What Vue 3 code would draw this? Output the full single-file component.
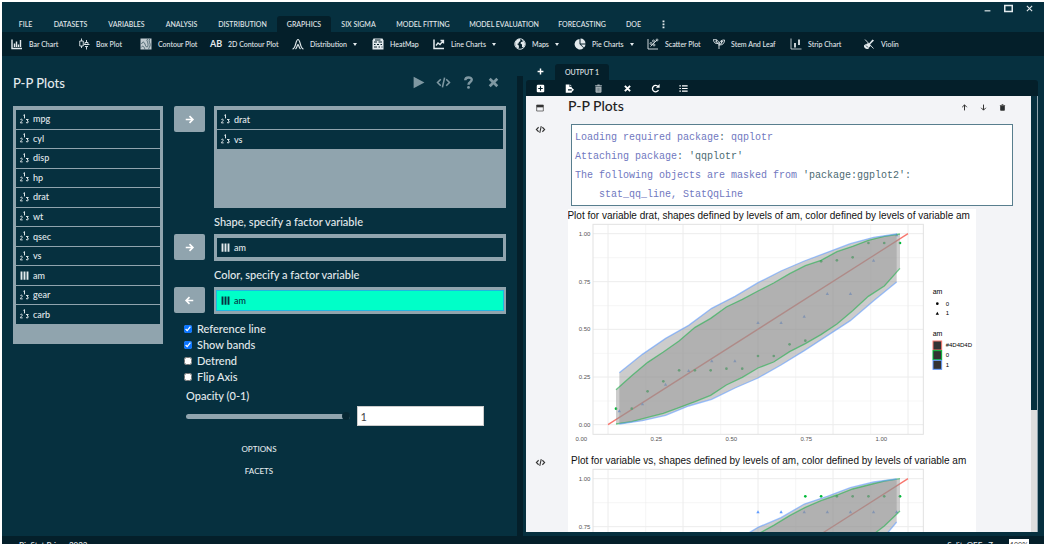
<script setup>
import { ref } from 'vue'

const icons = {
  bar: '<path d="M2 3v18h20M7 11v7M11 7v11M15 13v5M19 4v14" fill="none" stroke="currentColor" stroke-width="2.8"/>',
  box: '<path d="M7 1v5M7 16v4M17 4v5M17 17v6M3.500 6h7v10h-7zM14 9v4h6V9zM12 13h11M14 17h6" fill="none" stroke="currentColor" stroke-width="1.800"/>',
  contour: '<path d="M1 1h22v22H1z" fill="currentColor" opacity=".85"/><path d="M3 12c4-9 7 0 8 3s5 6 5-2-5-8 0-11M2 19c4-5 6-2 8 4M19 2c-3 5 3 9 1 14s-3 3-2 7" fill="none" stroke="#34505c" stroke-width="1.600"/>',
  dist: '<path d="M1 22c7 0 6-19 11-19s4 19 11 19M7 22c4-3 3-9 5-9s1 6 5 9" fill="none" stroke="currentColor" stroke-width="2.400"/>',
  heat: '<path d="M3 1h18l2 4v18H1V5z" fill="currentColor"/><path d="M4 8h6M13 8h7M4 13h3M10 13h4M17 13h3M4 18h6M13 18h3M19 18h2M6 4h11" stroke="#041f2a" stroke-width="2.200"/>',
  line: '<path d="M2 3v18h20" fill="none" stroke="currentColor" stroke-width="3"/><path d="M6 15l4-5 4 3 6-7M15 5h6v6" fill="none" stroke="currentColor" stroke-width="2.600"/>',
  globe: '<circle cx="12" cy="12" r="10.500" fill="none" stroke="currentColor" stroke-width="1.800"/><path d="M3 7c3-4 6-5 9-5l1 4-3 2-1 3-3 1 3 2 1 4-1 3c-5-2-8-7-6-14zM15 3c5 2 7 6 7 10l-3 6-3-1v-5l-3-2 1-3 4-1z" fill="currentColor"/>',
  pie: '<path d="M11 2a10.500 10.500 0 1 0 8 18l-8-8zM13 1v10h10A10 10 0 0 0 13 1zM14 13l6 6a10 10 0 0 0 3-6z" fill="currentColor"/>',
  scatter: '<path d="M2 2v20h20M7 17l13-13" fill="none" stroke="currentColor" stroke-width="1.800"/><g fill="none" stroke="currentColor" stroke-width="1.500"><circle cx="8" cy="11" r="2"/><circle cx="13" cy="6" r="2"/><circle cx="14" cy="14" r="2"/><circle cx="20" cy="4" r="2"/></g>',
  leaf: '<path d="M12 22V11C11 4 7 3 1 3c0 6 4 9 9 8M12 15c0-8 4-11 11-11 0 6-3 10-10 10M5 6l6 6M20 6l-7 8M6 3l2 6M17 5l0 6" fill="none" stroke="currentColor" stroke-width="1.800"/>',
  strip: '<path d="M2 1v21h21" fill="none" stroke="currentColor" stroke-width="1.600"/><path d="M10 10v9M18 3v11" stroke="currentColor" stroke-width="3.500"/>',
  violin: '<path d="M2 15c2-3 4-1 5-3s3-2 5-1l7-8 3 2-8 8c2 2 1 4-1 5s0 3-3 4-9-2-8-7z" fill="currentColor"/><path d="M4 3l17 18M5 18l5-5" stroke="currentColor" stroke-width="1.800"/><path d="M6 15l4 4" stroke="#041f2a" stroke-width="1.600"/>',
  play: '<path d="M3 1.500v21L23 12z" fill="currentColor"/>',
  code: '<path d="M7 6l-6 6 6 6M17 6l6 6-6 6M14 3l-4 18" fill="none" stroke="currentColor" stroke-width="2.900"/>',
  help: '<path d="M6 8c0-7 12-7 12-1 0 4-6 4-6 9" fill="none" stroke="currentColor" stroke-width="4.500"/><circle cx="12" cy="21" r="2.600" fill="currentColor"/>',
  close: '<path d="M5 5l14 14M19 5L5 19" stroke="currentColor" stroke-width="5"/>',
  plus: '<path d="M12 2v20M2 12h20" stroke="currentColor" stroke-width="5"/>',
  addBox: '<path d="M2 5a3 3 0 0 1 3-3h14a3 3 0 0 1 3 3v14a3 3 0 0 1-3 3H5a3 3 0 0 1-3-3z" fill="currentColor"/><path d="M12 6v12M6 12h12" stroke="#041f2a" stroke-width="3"/>',
  exportFile: '<path d="M2 1h10v7h6v6H8v3h10v6H2zM14 1l4 5h-4zM18 10l6 5.500-6 5.500z" fill="currentColor"/>',
  trash: '<path d="M3 3h6V1h6v2h6v3H3zM4 7h16v14l-2 2H6l-2-2z" fill="currentColor"/><path d="M8.500 10v10M12 10v10M15.500 10v10" stroke="#041f2a" stroke-opacity=".6" stroke-width="1.200"/>',
  redo: '<path d="M19 7A8.500 8.500 0 1 0 20 16" fill="none" stroke="currentColor" stroke-width="3.500"/><path d="M13 10h10V0z" fill="currentColor"/>',
  list: '<path d="M8 5h15M8 12h15M8 19h15M1 5h4M1 12h4M1 19h4" stroke="currentColor" stroke-width="3.200"/>',
  panel: '<path d="M2 3h20v18H2z" fill="none" stroke="currentColor" stroke-width="2"/><path d="M2 3h20v7H2z" fill="currentColor"/>',
  up: '<path d="M12 22V3M4 11l8-8 8 8" fill="none" stroke="currentColor" stroke-width="3.400"/>',
  down: '<path d="M12 2v19M4 13l8 8 8-8" fill="none" stroke="currentColor" stroke-width="3.400"/>',
  right: '<path d="M2 12h19M12 3l9 9-9 9" fill="none" stroke="currentColor" stroke-width="4.400"/>',
  left: '<path d="M22 12H3M12 3l-9 9 9 9" fill="none" stroke="currentColor" stroke-width="4.400"/>',
  factor: '<path d="M4 1v22M12 1v22M20 1v22" stroke="currentColor" stroke-width="5"/>',
  scale: '<g fill="none" stroke="currentColor" stroke-width="2.600"><path d="M9 1l3-2v10"/><path d="M1 13c1-3 6-2 5 1-1 2-5 5-5 7h6M16 12h6l-3 4c5 0 4 5 0 5l-3-1"/></g>',
  more: '<path d="M12 1v5M12 9v5M12 17v5" stroke="currentColor" stroke-width="5"/>',
  minimise: '<path d="M2 20h20" stroke="currentColor" stroke-width="4"/>',
  maximise: '<path d="M2 4h20v16H2z" fill="none" stroke="currentColor" stroke-width="4"/>',
  shut: '<path d="M3 3l18 18M21 3L3 21" stroke="currentColor" stroke-width="3.800"/>'
}

const menus = ['FILE', 'DATASETS', 'VARIABLES', 'ANALYSIS', 'DISTRIBUTION', 'GRAPHICS', 'SIX SIGMA', 'MODEL FITTING', 'MODEL EVALUATION', 'FORECASTING', 'DOE']
const tools = [
  { icon: 'bar', label: 'Bar Chart' },
  { icon: 'box', label: 'Box Plot' },
  { icon: 'contour', label: 'Contour Plot' },
  { text: 'AB', label: '2D Contour Plot' },
  { icon: 'dist', label: 'Distribution', more: true },
  { icon: 'heat', label: 'HeatMap' },
  { icon: 'line', label: 'Line Charts', more: true },
  { icon: 'globe', label: 'Maps', more: true },
  { icon: 'pie', label: 'Pie Charts', more: true },
  { icon: 'scatter', label: 'Scatter Plot' },
  { icon: 'leaf', label: 'Stem And Leaf' },
  { icon: 'strip', label: 'Strip Chart' },
  { icon: 'violin', label: 'Violin' }
]
const variables = ['mpg', 'cyl', 'disp', 'hp', 'drat', 'wt', 'qsec', 'vs', 'am', 'gear', 'carb']
const checks = ref([
  { label: 'Reference line', on: true },
  { label: 'Show bands', on: true },
  { label: 'Detrend', on: false },
  { label: 'Flip Axis', on: false }
])
const opacity = ref(1)
const outputTools = ['addBox', 'exportFile', 'trash', 'close', 'redo', 'list']

const gx = i => 168 + i * 47.333
const bx = i => 178 + i * 69.333
const path = (x, ys) => ys.map((y, i) => `${Math.round(x(i))},${y}`).join(' ')
const area = (x, upper, lower) =>
  path(x, upper) + ' ' + lower.map((y, i) => `${Math.round(x(i))},${y}`).reverse().join(' ')

const series = [
  {
    name: 'drat',
    gu: [554, 512, 472, 441, 408, 367, 340, 306, 283, 258, 234, 206, 182, 166, 140, 124, 106, 94, 87],
    gl: [657, 650, 637, 625, 608, 590, 571, 540, 517, 489, 471, 440, 416, 389, 357, 317, 274, 243, 190],
    bu: [503, 448, 400, 361, 310, 274, 233, 198, 168, 142, 116, 97, 87],
    bl: [657, 647, 631, 603, 583, 549, 519, 480, 437, 392, 347, 287, 231],
    gp: [611, 611, 559, 529, 496, 496, 496, 491, 491, 453, 453, 418, 407, 169, 166, 157, 114, 114, 114],
    bp: [618, 597, 538, 497, 468, 468, 353, 353, 334, 266, 266, 166, 90]
  },
  {
    name: 'vs',
    gu: [554, 512, 472, 441, 408, 367, 340, 306, 283, 252, 226, 197, 172, 152, 135, 117, 105, 93, 86],
    gl: [657, 650, 637, 625, 608, 590, 571, 540, 517, 489, 471, 440, 416, 389, 357, 317, 265, 228, 183],
    bu: [503, 448, 400, 361, 310, 274, 232, 203, 162, 139, 113, 96, 87],
    bl: [657, 647, 631, 603, 583, 549, 519, 480, 437, 392, 347, 299, 216],
    gp: [599, 599, 599, 599, 599, 599, 599, 599, 599, 599, 599, 599, 139, 139, 139, 139, 139, 139, 139],
    bp: [552, 552, 552, 552, 552, 552, 186, 186, 186, 186, 186, 186, 186]
  }
]
const ticks = [
  { t: '1.00', x: 1044, y: 86 },
  { t: '0.75', x: 819, y: 230 },
  { t: '0.50', x: 594, y: 373 },
  { t: '0.25', x: 369, y: 516 },
  { t: '0.00', x: 144, y: 659 }
]
</script>

<template>
  <div class="window">
    <header class="menubar">
      <nav class="menus">
        <button v-for="m in menus" :key="m" class="menu" :class="{ active: m === 'GRAPHICS' }">{{ m }}</button>
        <button class="menu" aria-label="More menus"><svg class="i9" viewBox="0 0 24 24" v-html="icons.more"></svg></button>
      </nav>
      <div class="controls">
        <button aria-label="Minimise"><svg class="i7" viewBox="0 0 24 24" v-html="icons.minimise"></svg></button>
        <button aria-label="Maximise"><svg class="i9" viewBox="0 0 24 24" v-html="icons.maximise"></svg></button>
        <button aria-label="Close"><svg class="i7" viewBox="0 0 24 24" v-html="icons.shut"></svg></button>
      </div>
    </header>

    <div class="toolbar">
      <button v-for="t in tools" :key="t.label" class="tool">
        <b v-if="t.text" class="ab">{{ t.text }}</b>
        <svg v-else class="i12" viewBox="0 0 24 24" v-html="icons[t.icon]"></svg>
        <span>{{ t.label }}</span>
        <i v-if="t.more" class="caret"></i>
      </button>
    </div>

    <main class="work">
      <section class="dialog">
        <div class="dialog-head">
          <h1>P-P Plots</h1>
          <div class="dialog-actions">
            <button v-for="a in ['play', 'code', 'help', 'close']" :key="a" :aria-label="a">
              <svg class="i13" viewBox="0 0 24 24" v-html="icons[a]"></svg>
            </button>
          </div>
        </div>

        <div class="form">
          <ul class="source well">
            <li v-for="v in variables" :key="v" class="var">
              <svg class="i9" viewBox="0 0 24 24" v-html="v === 'am' ? icons.factor : icons.scale"></svg>{{ v }}
            </li>
          </ul>

          <div class="targets">
            <div class="target">
              <button class="move" aria-label="Add variable"><svg class="i9" viewBox="0 0 24 24" v-html="icons.right"></svg></button>
              <ul class="well tall">
                <li v-for="v in ['drat', 'vs']" :key="v" class="var"><svg class="i9" viewBox="0 0 24 24" v-html="icons.scale"></svg>{{ v }}</li>
              </ul>
            </div>
            <p class="caption">Shape, specify a factor variable</p>
            <div class="target">
              <button class="move" aria-label="Add shape"><svg class="i9" viewBox="0 0 24 24" v-html="icons.right"></svg></button>
              <ul class="well"><li class="var"><svg class="i9" viewBox="0 0 24 24" v-html="icons.factor"></svg>am</li></ul>
            </div>
            <p class="caption">Color, specify a factor variable</p>
            <div class="target">
              <button class="move" aria-label="Remove color"><svg class="i9" viewBox="0 0 24 24" v-html="icons.left"></svg></button>
              <ul class="well"><li class="var picked"><svg class="i9" viewBox="0 0 24 24" v-html="icons.factor"></svg>am</li></ul>
            </div>

            <div class="checks">
              <label v-for="c in checks" :key="c.label"><input v-model="c.on" type="checkbox" />{{ c.label }}</label>
            </div>
            <label class="opacity-label" for="opacity">Opacity (0-1)</label>
            <div class="opacity">
              <input id="opacity" v-model="opacity" type="range" min="0" max="1" step="0.1" />
              <input v-model="opacity" type="text" class="number" aria-label="Opacity value" />
            </div>
            <div class="more">
              <button>OPTIONS</button>
              <button>FACETS</button>
            </div>
          </div>
        </div>
      </section>

      <div class="splitter"></div>

      <section class="output">
        <div class="output-tabs">
          <button class="new" aria-label="New output"><svg class="i7" viewBox="0 0 24 24" v-html="icons.plus"></svg></button>
          <button class="menu active">OUTPUT 1</button>
        </div>
        <div class="output-tools">
          <button v-for="o in outputTools" :key="o" :aria-label="o">
            <svg class="i9" :class="o" viewBox="0 0 24 24" v-html="icons[o]"></svg>
          </button>
        </div>
        <div class="viewport">
          <div class="doc">
            <div class="doc-head">
              <svg class="gutter" viewBox="0 0 24 24" v-html="icons.panel"></svg>
              <h2>P-P Plots</h2>
              <div class="doc-actions">
                <button v-for="a in ['up', 'down', 'trash']" :key="a" :aria-label="a">
                  <svg class="i7" viewBox="0 0 24 24" v-html="icons[a]"></svg>
                </button>
              </div>
            </div>
            <div class="block">
              <svg class="gutter" viewBox="0 0 24 24" v-html="icons.code"></svg>
              <pre class="log">Loading required package<em>:</em> qqplotr
Attaching package<em>: 'qqplotr'</em>
The following objects are masked from <em>'package:ggplot2':</em>
    stat_qq_line, StatQqLine</pre>
            </div>
            <div v-for="s in series" :key="s.name" class="block plot">
              <svg class="gutter" :class="{ blank: s.name === 'drat' }" viewBox="0 0 24 24" v-html="icons.code"></svg>
              <svg class="chart" viewBox="24 12 1224 735">
                <rect x="24" y="12" width="1224" height="735" fill="#fff" />
                <text class="chart-title" x="626" y="42" text-anchor="middle">Plot for variable {{ s.name }}, shapes defined by levels of am, color defined by levels of variable am</text>
                <g stroke="#ececec" fill="none">
                  <g v-for="t in ticks" :key="t.t">
                    <path :d="`M99 ${t.y}H1090M${t.x} 58V688`" stroke-width="3" />
                    <path v-if="t.y < 600" :d="`M99 ${t.y + 72}H1090M${t.x - 112} 58V688`" stroke-width="1.5" />
                  </g>
                  <rect x="99" y="58" width="991" height="630" stroke="#e2e2e2" stroke-width="3" />
                </g>
                <g v-for="t in ticks" :key="'l' + t.t" class="tick">
                  <text x="91" :y="t.y + 6" text-anchor="end">{{ t.t }}</text>
                  <text :x="t.x - 80" y="709" text-anchor="middle">{{ t.t }}</text>
                </g>
                <path d="M144 659L1044 86" stroke="#f8766d" stroke-width="4" />
                <circle v-for="(y, i) in s.gp" :key="'g' + i" :cx="gx(i)" :cy="y" r="4" fill="#00ba38" />
                <path v-for="(y, i) in s.bp" :key="'b' + i" :d="`M${bx(i) - 5} ${y + 4}h10l-5-9z`" fill="#619cff" />
                <polygon :points="area(gx, s.gu, s.gl)" fill="#929292" fill-opacity=".47" />
                <polygon :points="area(bx, s.bu, s.bl)" fill="#929292" fill-opacity=".47" />
                <polyline :points="path(gx, s.gu)" class="edge green" />
                <polyline :points="path(gx, s.gl)" class="edge green" />
                <polyline :points="path(bx, s.bu)" class="edge blue" />
                <polyline :points="path(bx, s.bl)" class="edge blue" />
                <g class="legend">
                  <text class="legend-title" x="1118" y="268">am</text>
                  <circle cx="1132" cy="296" r="4" />
                  <text x="1157" y="302">0</text>
                  <path d="M1127 329h10l-5-9z" />
                  <text x="1157" y="331">1</text>
                  <text class="legend-title" x="1118" y="393">am</text>
                  <rect x="1119" y="408" width="26" height="27" stroke="#f8766d" />
                  <rect x="1119" y="437" width="26" height="27" stroke="#00ba38" />
                  <rect x="1119" y="466" width="26" height="27" stroke="#619cff" />
                  <text x="1157" y="426">#4D4D4D</text>
                  <text x="1157" y="456">0</text>
                  <text x="1157" y="485">1</text>
                </g>
              </svg>
            </div>
          </div>
          <div class="scrollbar"><div class="thumb"></div></div>
        </div>
      </section>
    </main>

    <footer class="status">
      <span>BioStat Prime 2023</span>
      <span class="split">Split: OFF</span>
      <span class="zoom">Z</span>
      <input class="percent" value="100%" aria-label="Zoom" />
    </footer>
  </div>
</template>

<style>
html, body, #app { height: 100%; }
body { margin: 0; background: #fff; overflow: hidden; }
</style>

<style scoped>
* { box-sizing: border-box; }
.window {
  height: calc(100vh - 4px);
  margin: 2px;
  display: flex;
  flex-direction: column;
  overflow: hidden;
  background: #06303f;
  color: #e3eaed;
  font: 500 10px/12px "Lato", "Open Sans", sans-serif;
}
button { border: 0; padding: 0; background: none; color: inherit; font: inherit; display: inline-flex; align-items: center; justify-content: center; }
ul, p, h1, h2, pre { margin: 0; padding: 0; }
ul { list-style: none; }
svg { display: block; flex: none; overflow: visible; }
.i7 { width: 7px; height: 7px; }
.i9 { width: 9px; height: 9px; }
.i12 { width: 12px; height: 12px; }
.i13 { width: 13px; height: 13px; }

.menubar { height: 30px; flex: none; display: flex; justify-content: space-between; padding-left: 6px; }
.menus { align-self: flex-end; display: grid; grid-template-columns: 35px 55px 57px 53px 69px 54px 55px 74px 88px 68px 35px 24px; }
.menu { height: 16px; font-size: 7px; line-height: 16px; white-space: nowrap; border-radius: 3px 3px 0 0; }
.menu.active { background: #041f2a; }
.controls { display: flex; gap: 13px; padding: 0 11px; height: 12px; align-items: center; }

.toolbar {
  height: 24px; flex: none; padding-left: 9px; background: #041f2a;
  display: grid; grid-template-columns: 67px 62px 70px 82px 80px 61px 81px 60px 73px 66px 77px 73px 50px;
}
.tool { justify-content: flex-start; gap: 6px; font-size: 7px; white-space: nowrap; }
.ab { font-size: 9px; width: 12px; }
.caret { border: 2px solid transparent; border-top: 3px solid #e3eaed; border-bottom: 0; }

.work { flex: 1; min-height: 0; display: flex; }
.dialog { flex: 1; min-width: 0; padding: 0 11px; }
.dialog-head { height: 50px; padding-top: 3px; display: flex; align-items: center; justify-content: space-between; }
h1, h2 { font-size: 13px; line-height: 18px; font-weight: 500; }
h2 { font-size: 14px; }
.dialog-actions { display: flex; gap: 12px; padding-right: 6px; color: #7f98a2; }
.form { display: grid; grid-template-columns: 150px 1fr; gap: 11px; align-items: start; }
.well { background: #90a4ae; padding: 4px 3px; display: grid; gap: 1px; align-content: start; }
.source { height: 238px; padding-bottom: 20px; grid-auto-rows: 1fr; align-content: stretch; }
.var { min-height: 19px; display: flex; align-items: center; gap: 4px; padding: 0 4px; background: #06303f; font-size: 9px; }
.source .var { min-height: 18px; }
.picked { background: #00ffc8; color: #06303f; outline: 1px solid #1fb6e0; }
.targets { display: flex; flex-direction: column; }
.target { display: grid; grid-template-columns: 31px 1fr; gap: 9px; align-items: start; }
.move { height: 26px; background: #90a4ae; color: #fff; border-radius: 2px; }
.tall { height: 102px; }
.caption { padding: 8px 0 6px 40px; font-size: 11px; }
.checks { display: grid; grid-auto-rows: 16px; padding: 7px 0 0 10px; font-size: 11px; }
.checks label { display: flex; align-items: center; gap: 5px; }
.checks input { width: 8px; height: 8px; margin: 0; accent-color: #0b75ff; }
.opacity-label { padding: 5px 0 4px 12px; font-size: 11px; }
.opacity { display: grid; grid-template-columns: 163fr 127fr; align-items: center; gap: 7px; padding: 0 22px 0 12px; }
.opacity input { width: 100%; min-width: 0; }
.opacity input[type=range] { appearance: none; height: 5px; margin: 0; border-radius: 3px; background: #90a4ae; }
.opacity input[type=range]::-webkit-slider-thumb { appearance: none; width: 8px; height: 8px; border-radius: 4px; background: #062733; }
.number { height: 20px; border: 1px solid #ccc; padding: 0 3px; background: #fff; color: #444; font: 11px "Lato", sans-serif; }
.more { display: grid; grid-auto-rows: 22px; width: 170px; padding-top: 12px; font-size: 8px; }

.splitter { width: 6px; margin-top: 20px; background: #041f2a; flex: none; }
.output { flex: none; width: 50%; padding: 0 6px 4px 3px; display: flex; flex-direction: column; }
.output-tabs { display: flex; height: 24px; flex: none; align-items: flex-end; }
.output-tabs .new { width: 29px; height: 17px; color: #fff; }
.output-tabs .menu { width: 54px; }
.output-tools { height: 16px; flex: none; display: grid; grid-template-columns: 29px 29px 29px 28px 28px 29px; background: #041f2a; border-radius: 3px 3px 0 0; color: #fff; }
.output-tools .trash { color: #a9b4b9; }
.viewport { flex: 1; min-height: 0; display: flex; }
.doc { flex: 1; min-width: 0; overflow: hidden; background: #f3f4f7; color: #222; }
.gutter { width: 9px; height: 9px; color: #333; }
.doc-head { display: flex; align-items: center; height: 19px; }
.doc-head .gutter { height: 8px; width: 8px; margin: 4px 24px 0 10px; }
.doc-actions { margin-left: auto; display: flex; gap: 12px; padding: 3px 25px 0 0; color: #333; }
.block { display: flex; }
.block .gutter { margin: 10px 23px 0 10px; }
.log {
  flex: 1; height: 82px; margin: 9px 18px 3px 3px; padding: 3px; border: 1px solid #587e8e; background: #fff;
  font: 10px/19px "Liberation Mono", monospace; color: #7078c0;
}
.log em { font-style: normal; color: #4b6a72; }
.plot .gutter { margin-top: 4px; }
.blank { visibility: hidden; }
.chart { flex: none; width: 408px; overflow: hidden; font-family: "Liberation Sans", Arial, sans-serif; }
.chart-title { font-size: 30px; fill: #111; }
.tick { font-size: 18px; fill: #555; }
.edge { fill: none; stroke-width: 4; stroke-opacity: .6; }
.green { stroke: #22b14c; }
.blue { stroke: #619cff; }
.legend { font-size: 18px; }
.legend-title { font-size: 21px; }
.legend rect { fill: #333; stroke-width: 3; }
.scrollbar { width: 7px; flex: none; background: #dedede; border-right: 1px solid #90a4ae; }
.thumb { height: 72%; background: #06303f; }

.status { height: 8px; flex: none; display: flex; align-items: flex-start; overflow: hidden; background: #041f2a; padding: 3px 15px 0 17px; font-size: 8px; }
.split { margin-left: auto; }
.zoom { margin: 0 16px 0 6px; }
.percent { width: 20px; height: 12px; border: 0; padding: 0 1px; background: #fff; color: #333; font: 7px "Lato", sans-serif; }
</style>
